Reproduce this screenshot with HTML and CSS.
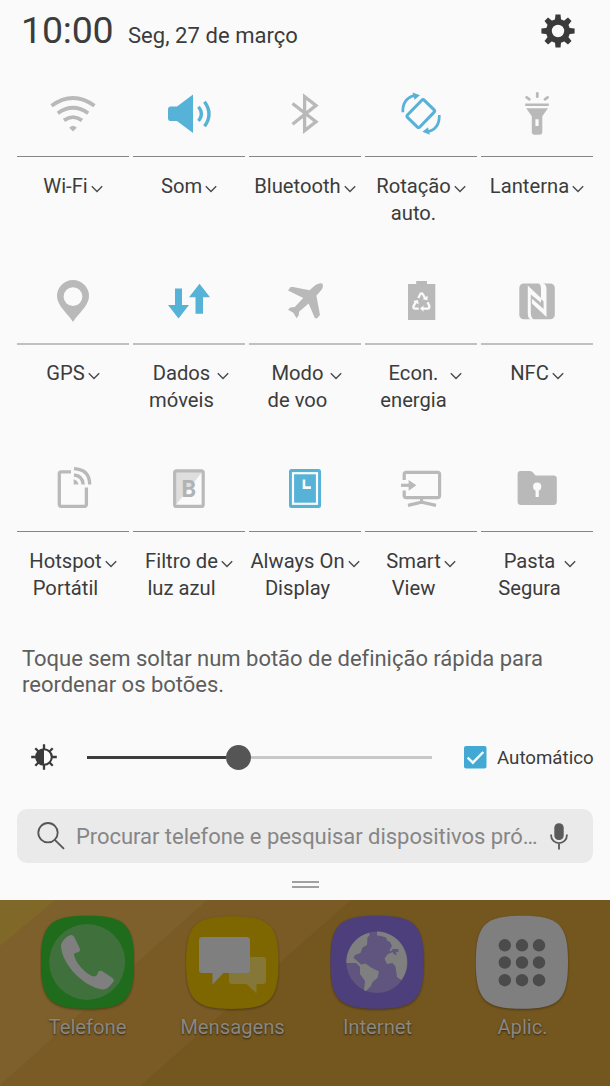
FILE: index.html
```html
<!DOCTYPE html>
<html lang="pt">
<head>
<meta charset="utf-8">
<title>Definições rápidas</title>
<link rel="stylesheet" href="styles.css">
</head>
<body>
<div class="phone">
  <section class="panel">
    <header class="header">
      <span class="clock">10:00</span>
      <span class="date">Seg, 27 de março</span>
      <svg class="gear" viewBox="-17 -17 34 34">
        <g fill="#3a3a3a">
          <path id="tooth" d="M-3.2-10L-2.5-16.6H2.5L3.2-10V10L2.5 16.6H-2.5L-3.2 10Z"/>
          <use href="#tooth" transform="rotate(45)"/><use href="#tooth" transform="rotate(90)"/><use href="#tooth" transform="rotate(135)"/>
          <circle r="12"/>
        </g>
        <circle r="6.2" fill="#fafafa"/>
      </svg>
    </header>

    <div class="tiles">
      <div class="tile">
        <svg class="icon" viewBox="17 83 112 73"><g fill="none" stroke="#b9b9b9" stroke-width="3.8"><path d="M51.500 105.800Q73 90.200 94.500 105.800M57.800 113.200Q73 102.300 88.200 113.200M64 120.400Q73 113.800 82 120.400"/></g><path d="M69.200 127.800Q73 123.500 76.800 127.800L73 131.500Z" fill="#b9b9b9"/></svg>
        <div class="label"><span>Wi-Fi</span><svg class="chev" viewBox="0 0 12 8"><path d="M.8 1.2L6 6.4 11.2 1.2"/></svg></div>
      </div>
      <div class="tile">
        <svg class="icon" viewBox="133 83 112 73"><path d="M170 106.500H177L193 94.500V133L177 121H170Q168 120.500 168 118.500V109Q168 107 170 106.500Z" fill="#56b2d6"/><path d="M198.500 106.800Q204.300 114 198.500 121M204.500 101.700Q213.500 114 204.500 126.300" fill="none" stroke="#56b2d6" stroke-width="3.400"/></svg>
        <div class="label"><span>Som</span><svg class="chev" viewBox="0 0 12 8"><path d="M.8 1.2L6 6.4 11.2 1.2"/></svg></div>
      </div>
      <div class="tile">
        <svg class="icon" viewBox="249 83 112 73"><path d="M292.500 103.500L316 121.800 304.600 130.600V96.600L316 105.400 292.500 124.200" fill="none" stroke="#b9b9b9" stroke-width="3.300"/></svg>
        <div class="label"><span>Bluetooth</span><svg class="chev" viewBox="0 0 12 8"><path d="M.8 1.2L6 6.4 11.2 1.2"/></svg></div>
      </div>
      <div class="tile">
        <svg class="icon" viewBox="365 83 112 73"><g fill="none" stroke="#56b2d6" stroke-width="3"><rect x="-12" y="-8.600" width="24" height="17.200" rx="2" transform="translate(420.800 113.600) rotate(-46)"/><path stroke-width="2.700" d="M402.800 112.300C402.500 103 407 97.500 414 95.600M439.300 115C439.500 124.500 435 130 428 131.600"/></g><path d="M412.500 92.600L420 95.300 414.500 99.800ZM429.800 134.800L422.400 131.800 428 127.200Z" fill="#56b2d6"/></svg>
        <div class="label"><span>Rotação<br>auto.</span><svg class="chev" viewBox="0 0 12 8"><path d="M.8 1.2L6 6.4 11.2 1.2"/></svg></div>
      </div>
      <div class="tile">
        <svg class="icon" viewBox="481 83 112 73"><g stroke="#b9b9b9" stroke-width="2.800" stroke-linecap="round"><path d="M537.300 93.300V96.700M526.700 97.400L529.400 99.300M547.600 97.400L544.900 99.300"/></g><path d="M525.200 103.400H548.800V106H525.200ZM526.200 108.200H548L542.300 116.300V132Q542.300 134.800 539.500 134.800H534.500Q531.800 134.800 531.800 132V116.300ZM535.400 119.300V126H538.600V119.300Z" fill="#b9b9b9" fill-rule="evenodd"/></svg>
        <div class="label"><span>Lanterna</span><svg class="chev" viewBox="0 0 12 8"><path d="M.8 1.2L6 6.4 11.2 1.2"/></svg></div>
      </div>

      <div class="tile soft">
        <svg class="icon" viewBox="17 270 112 73"><path d="M73 322C68 313.500 57 306 57 296A16 16 0 0 1 89 296C89 306 78 313.500 73 322ZM73 287.200A9.400 9.400 0 1 0 73 306A9.400 9.400 0 1 0 73 287.200Z" fill="#b9b9b9" fill-rule="evenodd"/></svg>
        <div class="label"><span>GPS</span><svg class="chev" viewBox="0 0 12 8"><path d="M.8 1.2L6 6.4 11.2 1.2"/></svg></div>
      </div>
      <div class="tile soft">
        <svg class="icon" viewBox="133 270 112 73"><path d="M175 288.600H182V305H189L178.500 318.500 168 305H175ZM199.500 283.800L210 297.300H203V313.800H195.500V297.300H189Z" fill="#56b2d6"/></svg>
        <div class="label"><span>Dados<br>móveis</span><svg class="chev" viewBox="0 0 12 8"><path d="M.8 1.2L6 6.4 11.2 1.2"/></svg></div>
      </div>
      <div class="tile soft">
        <svg class="icon" viewBox="249 270 112 73"><path d="M288 290.400L290.600 287H293L309.500 290.200 315.500 285Q319.500 282.700 322.200 283.600 323.800 286 321.800 289.500L316.400 295.800 320 315 316.800 318.400 314.800 318 308.600 303.500 299 311.800 298.800 315 296.600 318.300 293.300 312.700 288 309.800 290.300 307.500 294.800 307 303.200 298Z" fill="#b9b9b9"/></svg>
        <div class="label"><span>Modo<br>de voo</span><svg class="chev" viewBox="0 0 12 8"><path d="M.8 1.2L6 6.4 11.2 1.2"/></svg></div>
      </div>
      <div class="tile soft">
        <svg class="icon" viewBox="365 270 112 73"><path d="M408 284H416.200V281H427V284H435.300V320H408Z" fill="#b9b9b9"/><g fill="none" stroke="#fafafa" stroke-width="2.300"><path d="M418.300 298L420.200 294.300Q421.500 292.600 422.900 294.300L425.400 298.800M427.500 302.200L429.300 305.800Q429.800 308.600 427.500 308.700H422.700M418.800 308.700H415Q412.700 308.300 413.600 306L416 301.600"/></g><path d="M422.600 299.300L427.500 300.300 427.700 295.700ZM423.500 305.400V311.800L420 308.600ZM413 301L417.800 300 418.800 304.500Z" fill="#fafafa"/></svg>
        <div class="label"><span>Econ.<br>energia</span><svg class="chev" viewBox="0 0 12 8"><path d="M.8 1.2L6 6.4 11.2 1.2"/></svg></div>
      </div>
      <div class="tile soft">
        <svg class="icon" viewBox="481 270 112 73"><rect x="519.300" y="283.500" width="35.500" height="35.700" rx="4.500" fill="#b9b9b9"/><path d="M531.500 320Q527.800 318.500 527.800 313.500V285.500L541 298V288Q541 284.500 538.500 283H543Q546.500 284.500 546.500 289V317L532.500 304Q530.800 302 530.800 299V313Q530.800 317.500 534 320Z" fill="#fafafa"/><path d="M530.800 294.500L541 302.800V299L543.600 301.500V309L532 298.800L531.800 303.500L530.800 302Z" fill="#b9b9b9"/></svg>
        <div class="label"><span>NFC</span><svg class="chev" viewBox="0 0 12 8"><path d="M.8 1.2L6 6.4 11.2 1.2"/></svg></div>
      </div>

      <div class="tile">
        <svg class="icon" viewBox="17 458 112 73"><g fill="none" stroke="#b9b9b9" stroke-width="3.300"><path d="M71 471.800H61.300Q59.300 471.800 59.300 473.800V504.300Q59.300 506.300 61.300 506.300H84.400Q86.400 506.300 86.400 504.300V487.500"/><path d="M74 468.700Q89.600 469.500 89.700 484.500M74 475Q82.700 475.800 83.200 484.500"/></g><path d="M73.600 479.200Q77.700 480 78.500 484.500H73.600Z" fill="#b9b9b9"/></svg>
        <div class="label"><span>Hotspot<br>Portátil</span><svg class="chev" viewBox="0 0 12 8"><path d="M.8 1.2L6 6.4 11.2 1.2"/></svg></div>
      </div>
      <div class="tile">
        <svg class="icon" viewBox="133 458 112 73"><path d="M175 471H203L175 506Z" fill="#dedede"/><rect x="174.600" y="470.800" width="28.600" height="35.600" rx="2" fill="none" stroke="#b9b9b9" stroke-width="3.200"/><text class="glyph-b" x="188.800" y="496.500">B</text></svg>
        <div class="label"><span>Filtro de<br>luz azul</span><svg class="chev" viewBox="0 0 12 8"><path d="M.8 1.2L6 6.4 11.2 1.2"/></svg></div>
      </div>
      <div class="tile">
        <svg class="icon" viewBox="249 458 112 73"><rect x="289" y="469" width="32" height="39" rx="2.500" fill="#56b2d6"/><rect x="293" y="473.200" width="24" height="30.600" fill="none" stroke="#fafafa" stroke-width="2.200"/><path d="M304 479.500V487.600H311" fill="none" stroke="#fafafa" stroke-width="2.600"/></svg>
        <div class="label"><span>Always On<br>Display</span><svg class="chev" viewBox="0 0 12 8"><path d="M.8 1.2L6 6.4 11.2 1.2"/></svg></div>
      </div>
      <div class="tile">
        <svg class="icon" viewBox="365 458 112 73"><g fill="none" stroke="#b9b9b9" stroke-width="3.200"><path d="M404.200 480V474.400Q404.200 472.400 406.200 472.400H437.600Q439.600 472.400 439.600 474.400V495.600Q439.600 497.600 437.600 497.600H406.200Q404.200 497.600 404.200 495.600V490.500M421.600 498V502M408 505.400L421.600 502.200 436 505.400"/><path d="M401 485.300H410"/></g><path d="M408.600 480L416.400 485.300 408.600 490.700Z" fill="#b9b9b9"/></svg>
        <div class="label"><span>Smart<br>View</span><svg class="chev" viewBox="0 0 12 8"><path d="M.8 1.2L6 6.4 11.2 1.2"/></svg></div>
      </div>
      <div class="tile">
        <svg class="icon" viewBox="481 458 112 73"><path d="M517.600 474Q517.600 471 520.600 471H530Q532 471 533.200 472.700L535.500 475.600H553.500Q556.800 475.600 556.800 478.800V501.500Q556.800 505 553.500 505H521Q517.600 505 517.600 501.500Z" fill="#b9b9b9"/><circle cx="537.200" cy="486.700" r="4.100" fill="#fafafa"/><path d="M535.600 488H538.800V497H535.600Z" fill="#fafafa"/></svg>
        <div class="label"><span>Pasta<br>Segura</span><svg class="chev" viewBox="0 0 12 8"><path d="M.8 1.2L6 6.4 11.2 1.2"/></svg></div>
      </div>
    </div>

    <p class="hint">Toque sem soltar num botão de definição rápida para<br>reordenar os botões.</p>

    <div class="brightness">
      <svg class="sun" viewBox="-13 -13 26 26"><g stroke="#3a3a3a" stroke-width="2.300"><path d="M0-12.800V-8M0 12.800V8M-12.800 0H-8M12.800 0H8M-8.700-8.700L-5.500-5.500M8.700 8.700L5.500 5.500M-8.700 8.700L-5.500 5.500M8.700-8.700L5.500-5.500"/></g><circle r="7.800" fill="#fafafa" stroke="#3a3a3a" stroke-width="2.100"/><path d="M0-7.600A7.600 7.600 0 0 0 0 7.600Z" fill="#3a3a3a"/></svg>
      <div class="slider"><div class="done"></div><div class="knob"></div><div class="rest"></div></div>
      <svg class="check" viewBox="0 0 23 23"><rect width="22.500" height="22.500" rx="2" fill="#41a9d4"/><path d="M3.600 11.600L8.900 16.700 19.300 6" fill="none" stroke="#fafafa" stroke-width="2.400"/></svg>
      <span class="auto">Automático</span>
    </div>

    <div class="search">
      <svg class="lens" viewBox="0 0 28 28"><circle cx="11" cy="10.700" r="9.700"/><path d="M17.800 17.800L27 26.800"/></svg>
      <span class="query">Procurar telefone e pesquisar dispositivos pró…</span>
      <svg class="mic" viewBox="0 0 18 27"><rect x="4.300" y=".3" width="9.400" height="16.700" rx="4.500" fill="#5a5a5a"/><path d="M1 11.500C1 23 17 23 17 11.500M9 20V26.500" fill="none" stroke="#5a5a5a" stroke-width="1.800"/></svg>
    </div>
    <div class="handle"></div>
  </section>

  <section class="home">
    <svg class="wall" viewBox="0 900 610 186"><path d="M0 900H610V1086H0Z" fill="#74561f"/><path d="M0 900H351L140 1086H0Z" fill="#7a5b26"/><path d="M0 900H207L0 1085Z" fill="#7d602b"/><path d="M0 900H55L0 946Z" fill="#806829"/></svg>
    <div class="apps">
      <div class="app">
        <svg class="app-icon" viewBox="40 914 95 98"><path class="squircle" d="M87.500 915.800C125 915.800 134 924.500 134 962.300S125 1008.800 87.500 1008.800 41 1000 41 962.300 50 915.800 87.500 915.800Z" fill="#1f6c1c"/><circle cx="87.200" cy="962" r="38" fill="#40713d"/><path d="M70.500 935Q72.500 934.500 74 936.500L80 949Q80.500 951 78.500 952L74 953.500C73.500 961 87 976 94.500 976.500Q97 976 98.300 972Q99.500 970 102 971L112.500 978Q114.700 980 113.500 981.500C110 986 107 989.500 102.500 989.500C84 987 61 964 61 945Q61.500 942 65 938.500Q68 935.500 70.500 935Z" fill="#7f7f7f"/></svg>
        <span>Telefone</span>
      </div>
      <div class="app">
        <svg class="app-icon" viewBox="185 914 95 98"><path class="squircle" d="M232.200 916.300C269.500 916.300 278.500 925 278.500 962.600S269.500 1009 232.200 1009 186 1000 186 962.600 195 916.300 232.200 916.300Z" fill="#7e6600"/><path d="M232 957H263Q266 957 266 960V981Q266 984 263 984H256.500V993.500L246.500 984H232Q229 984 229 981V960Q229 957 232 957Z" fill="#847737"/><path d="M202 937H247Q250 937 250 940V970Q250 973 247 973H223.500L212.500 984.500V973H202Q199 973 199 970V940Q199 937 202 937Z" fill="#7f7f7f"/></svg>
        <span>Mensagens</span>
      </div>
      <div class="app">
        <svg class="app-icon" viewBox="330 914 95 98"><path class="squircle" d="M377 915.800C414.500 915.800 423.700 924.500 423.700 962.300S414.500 1008.800 377 1008.800 330.400 1000 330.400 962.300 339.500 915.800 377 915.800Z" fill="#4c3f7c"/><circle cx="377" cy="962.300" r="30.700" fill="#5f557e"/><path d="M346.300 963A30.700 30.700 0 0 1 369 932.700L369.700 935 367.500 937.500 367 945 362.500 947.500 360.500 953 355 955 353.500 958 358 961.500 361 964.500 365.500 963.500 371 967.500 379 971.500 377.500 978 372.500 982 371 986 366 991 364 990.200 365 981 360 974V967L356 963ZM377 931.600A30.700 30.700 0 0 1 401.500 980L397 977 395.500 966.500 392.500 963 387 964 384.500 958.500 388 954 393 952 393 953.500 396.500 955.500 396 952 399 951.500 398 949 393 949 390.500 951.500 389.500 950 392 946 390 942 387 940.500 386 937.500 381 936 377 935.500Z" fill="#7f7f7f"/></svg>
        <span>Internet</span>
      </div>
      <div class="app">
        <svg class="app-icon" viewBox="475 914 95 98"><path class="squircle" d="M522 915.800C559 915.800 568 924.500 568 962.300S559 1008.800 522 1008.800 475.800 1000 475.800 962.300 485 915.800 522 915.800Z" fill="#7f7f7f"/><g fill="#4b4b4b"><circle cx="504.800" cy="945.300" r="6.200"/><circle cx="522" cy="945.300" r="6.200"/><circle cx="539" cy="945.300" r="6.200"/><circle cx="504.800" cy="962.500" r="6.200"/><circle cx="522" cy="962.500" r="6.200"/><circle cx="539" cy="962.500" r="6.200"/><circle cx="504.800" cy="980.200" r="6.200"/><circle cx="522" cy="980.200" r="6.200"/><circle cx="539" cy="980.200" r="6.200"/></g></svg>
        <span>Aplic.</span>
      </div>
    </div>
  </section>
</div>
</body>
</html>
```
FILE: styles.css
```css
body {
  margin: 0;
  background: #fafafa;
  font-family: Roboto, "Liberation Sans", sans-serif;
  color: #3c3c3c;
}

.phone {
  width: 610px;
  height: 1086px;
  overflow: hidden;
  display: flex;
  flex-direction: column;
}

.panel {
  height: 900px;
  box-sizing: border-box;
  padding: 0 17px;
  background: #fafafa;
  display: flex;
  flex-direction: column;
}

.header {
  height: 83px;
  padding: 0 18px 0 4px;
  display: flex;
  align-items: baseline;
}

.clock {
  font-size: 37.5px;
  line-height: 60px;
  letter-spacing: -0.2px;
  width: 107px;
}

.date {
  font-size: 22px;
  letter-spacing: 0.05px;
}

.gear {
  width: 34px;
  height: 34px;
  margin: 13.500px 0 0 auto;
  align-self: flex-start;
}

.tiles {
  display: grid;
  grid-template-columns: repeat(5, 112px);
  grid-template-rows: 187px 188px 175px;
  column-gap: 4px;
}

.tile {
  display: flex;
  flex-direction: column;
}

.icon {
  width: 112px;
  height: 73px;
  flex: none;
  border-bottom: 1px solid #858585;
}

.soft .icon {
  border-bottom: 2px solid #c0c0c0;
}

.label {
  display: flex;
  justify-content: center;
  gap: 3px;
  margin-top: 16px;
  font-size: 20.2px;
  line-height: 27px;
  text-align: center;
  white-space: nowrap;
}

.soft .label {
  margin-top: 15px;
}

.chev {
  width: 12px;
  height: 8px;
  flex: none;
  margin-top: 12px;
  fill: none;
  stroke: #4a4a4a;
  stroke-width: 1.4;
}

.glyph-b {
  font-size: 23px;
  font-weight: 700;
  text-anchor: middle;
  fill: #b2b2b2;
}

.hint {
  margin: 13px 0 0 5px;
  font-size: 22px;
  line-height: 25.5px;
  letter-spacing: -0.02px;
  color: #5e5e5e;
  white-space: nowrap;
}

.brightness {
  display: flex;
  align-items: center;
  height: 26px;
  margin-top: 47px;
  padding-left: 14px;
}

.sun {
  width: 26px;
  height: 26px;
  flex: none;
}

.slider {
  width: 345px;
  flex: none;
  margin-left: 30px;
  display: flex;
  align-items: center;
}

.done {
  width: 139px;
  height: 3px;
  background: #3c3c3c;
}

.knob {
  width: 25px;
  height: 25px;
  border-radius: 50%;
  background: #555;
}

.rest {
  flex: 1;
  height: 3px;
  background: #c8c8c8;
}

.check {
  width: 23px;
  height: 23px;
  flex: none;
  margin-left: 32px;
}

.auto {
  margin: 2px 0 0 10px;
  font-size: 18.7px;
  line-height: 26px;
}

.search {
  display: flex;
  align-items: center;
  height: 54px;
  margin-top: 39px;
  padding: 0 25px 0 20px;
  border-radius: 10px;
  background: #eaeaea;
}

.lens {
  width: 28px;
  height: 28px;
  fill: none;
  stroke: #555;
  stroke-width: 1.8;
}

.query {
  margin-left: 11px;
  font-size: 22px;
  letter-spacing: -0.04px;
  color: #868686;
  white-space: nowrap;
}

.mic {
  width: 18px;
  height: 27px;
  margin-left: auto;
}

.handle {
  width: 27px;
  height: 3px;
  margin: 18px auto 0;
  border: solid #a0a0a0;
  border-width: 2px 0;
}

.home {
  position: relative;
  height: 186px;
}

.wall {
  position: absolute;
  inset: 0;
  width: 610px;
  height: 186px;
}

.apps {
  position: relative;
  display: flex;
  justify-content: center;
  padding-top: 14px;
}

.app {
  width: 145px;
  display: flex;
  flex-direction: column;
  align-items: center;
  gap: 2px;
  font-size: 20.2px;
  line-height: 26px;
  color: #8a8781;
  text-shadow: 0 1px 2px rgba(0, 0, 0, 0.6);
}

.app-icon {
  width: 95px;
  height: 98px;
}

.squircle {
  filter: drop-shadow(0 1px 1px rgba(0, 0, 0, 0.35));
}
```
